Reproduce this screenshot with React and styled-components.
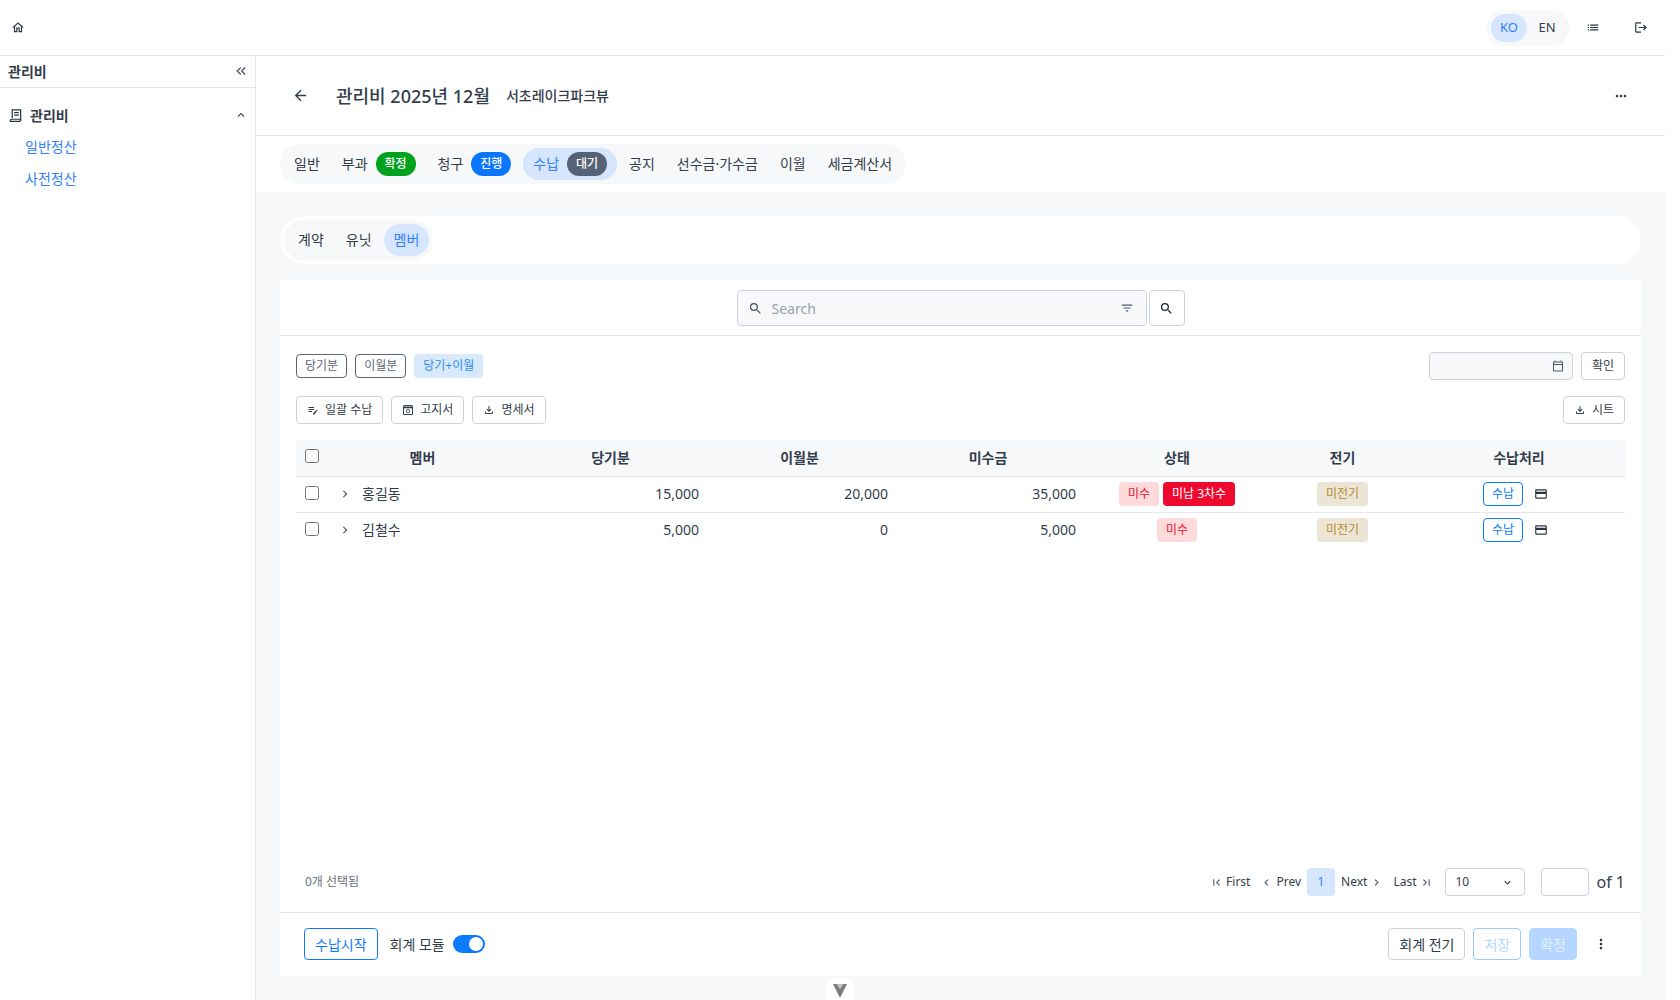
import React from "react";
import styled, { createGlobalStyle } from "styled-components";
import {
  MdOutlineHome,
  MdKeyboardDoubleArrowLeft,
  MdExpandLess,
  MdArrowBack,
  MdMoreHoriz,
  MdMoreVert,
  MdSearch,
  MdFilterList,
  MdOutlineCalendarToday,
  MdOutlineFileDownload,
  MdCreditCard,
  MdChevronRight,
  MdChevronLeft,
  MdFirstPage,
  MdLastPage,
  MdExpandMore,
  MdLogout,
  MdList,
  MdOutlineEditNote,
} from "react-icons/md";

const GlobalStyle = createGlobalStyle`
html, body {
  margin: 0;
  padding: 0;
  height: 100%;
  overflow: hidden;
  background: #fff;
}
body {
  font-family: "Noto Sans", "Noto Sans CJK KR", sans-serif;
  color: #333d4b;
  font-size: 14px;
  line-height: 1.5;
}
* { box-sizing: border-box; }
`;

const Page = styled.div`
position: relative;
height: 100vh;
padding-right: 15px;
display: flex;
flex-direction: column;
overflow: hidden;
`;
const TopBar = styled.header`
height: 56px;
flex: none;
display: flex;
align-items: center;
border-bottom: 1px solid #e5e7eb;
padding-left: 11px;
padding-right: 17px;
`;
const TopIcon = styled.span`
display: flex;
align-items: center;
justify-content: center;
width: 14px;
font-size: 15px;
color: #2b3444;
margin-left: ${(p) => p.$left || 0}px;
`;
const LangSwitch = styled.div`
margin-left: auto;
display: flex;
gap: 2px;
padding: 4px;
height: 36px;
border-radius: 18px;
background: #f7f8fa;
`;
const LangItem = styled.div`
width: 36px;
height: 28px;
border-radius: 14px;
font-size: 13px;
display: flex;
align-items: center;
justify-content: center;
color: ${(p) => (p.$active ? "#2f7fff" : "#333d4b")};
background: ${(p) => (p.$active ? "#d6e6ff" : "transparent")};
`;
const Body = styled.div`
flex: 1;
display: flex;
min-height: 0;
`;
const Sidebar = styled.aside`
width: 256px;
flex: none;
border-right: 1px solid #e5e7eb;
`;
const SideTitle = styled.div`
height: 32px;
display: flex;
align-items: center;
justify-content: space-between;
padding: 0 6px 1px 8px;
border-bottom: 1px solid #e5e7eb;
font-weight: 700;
font-size: 14px;
svg { font-size: 16px; color: #4a5568; }
`;
const SideGroup = styled.div`
height: 30px;
margin-top: 12px;
display: flex;
align-items: center;
padding: 0 7px 0 8px;
font-weight: 700;
font-size: 14px;
> svg:first-child { width: 15px; height: 15px; margin-right: 7px; }
> svg:last-child { margin-left: auto; font-size: 14px; }
`;
const SideLink = styled.div`
height: 32px;
display: flex;
align-items: center;
padding-left: 25px;
color: #2f7fff;
font-size: 14px;
`;
const Main = styled.main`
flex: 1;
min-width: 0;
display: flex;
flex-direction: column;
`;
const ContentHead = styled.div`
height: 80px;
flex: none;
display: flex;
align-items: center;
border-bottom: 1px solid #e5e7eb;
padding: 0 24px 0 36px;
> svg:first-child { font-size: 17px; margin-right: 27px; }
> svg:last-child { margin-left: auto; font-size: 16px; margin-right: 12px; }
`;
const PageTitle = styled.h1`
margin: 2px 0 0;
font-size: 18px;
font-weight: 500;
`;
const PageSub = styled.span`
font-size: 14px;
font-weight: 500;
margin-left: 16px;
`;
const TabRow = styled.div`
flex: none;
padding: 8px 24px;
height: 56px;
`;
const TabList = styled.div`
display: inline-flex;
align-items: center;
gap: 2px;
height: 40px;
padding: 4px;
border-radius: 20px;
background: #f7f8fa;
`;
const Tab = styled.div`
height: 32px;
padding: 0 10px 2px;
border-radius: 16px;
display: flex;
align-items: center;
gap: 8px;
white-space: nowrap;
font-size: 14px;
color: ${(p) => (p.$active ? "#2f7fff" : "#333d4b")};
background: ${(p) => (p.$active ? "#d6e6ff" : "transparent")};
`;
const TabBadge = styled.span`
height: 24px;
width: 40px;
margin-bottom: -2px;
border-radius: 12px;
color: #fff;
font-size: 12px;
font-weight: 500;
display: flex;
align-items: center;
justify-content: center;
background: ${(p) => p.$color};
`;
const Content = styled.div`
flex: 1;
min-height: 0;
background: #f7f8fa;
padding: 24px;
display: flex;
flex-direction: column;
gap: 16px;
`;
const SubStrip = styled.div`
height: 48px;
flex: none;
background: #fff;
border-radius: 24px;
padding: 4px;
`;
const Card = styled.section`
flex: 1;
min-height: 0;
background: #fff;
display: flex;
flex-direction: column;
`;
const SearchRow = styled.div`
height: 56px;
flex: none;
display: flex;
justify-content: center;
align-items: flex-start;
gap: 2px;
padding-top: 10px;
border-bottom: 1px solid #e5e7eb;
`;
const SearchBox = styled.div`
width: 410px;
height: 36px;
display: flex;
align-items: center;
padding: 0 12px 0 10px;
gap: 9px;
background: #f8f8fb;
border: 1px solid #cbd2e0;
border-radius: 4px;
color: #9aa1ac;
font-size: 14px;
svg:first-child { font-size: 15px; color: #4a5568; }
svg:last-child { margin-left: auto; font-size: 14px; color: #4a5568; }
`;
const SearchButton = styled.button`
width: 36px;
height: 36px;
padding: 0;
display: flex;
align-items: center;
justify-content: center;
background: #fff;
border: 1px solid #cbd2e0;
border-radius: 4px;
color: #1f2937;
font-size: 15px;
`;
const ToolRow = styled.div`
display: flex;
align-items: center;
gap: 8px;
padding: 0 16px;
margin-top: 16px;
height: 28px;
flex: none;
`;
const Spacer = styled.div`
flex: 1;
`;
const Pill = styled.button`
height: 24px;
padding: 0 ${(p) => (p.$active ? "9px" : "8px")};
font: inherit;
font-size: 12px;
border-radius: 4px;
border: ${(p) => (p.$active ? "none" : "1px solid #5a6478")};
background: ${(p) => (p.$active ? "#d7e9fb" : "#fff")};
color: ${(p) => (p.$active ? "#2e8fee" : "#5a6478")};
`;
const ToolButton = styled.button`
height: 28px;
padding: 0 10px;
display: flex;
align-items: center;
gap: 6px;
font: inherit;
font-size: 12px;
color: #333d4b;
background: #fff;
border: 1px solid #cbd2e0;
border-radius: 4px;
svg { width: 12px; height: 12px; }
`;
const DateInput = styled.div`
width: 144px;
height: 28px;
display: flex;
align-items: center;
justify-content: flex-end;
padding-right: 8px;
background: #f7f8fa;
border: 1px solid #cbd2e0;
border-radius: 4px;
color: #4a5568;
font-size: 12px;
`;
const gridCols = "33px 187px 189px 189px 188px 190px 141px 212px";
const TableWrap = styled.div`
margin: 16px 16px 0;
flex: none;
`;
const HeadRow = styled.div`
display: grid;
grid-template-columns: ${gridCols};
height: 37px;
padding-bottom: 2px;
align-items: center;
background: #f7f8fa;
border-bottom: 1px solid #e5e7eb;
font-weight: 700;
font-size: 14px;
text-align: center;
`;
const Row = styled.div`
display: grid;
grid-template-columns: ${gridCols};
height: 36px;
padding-bottom: 2px;
align-items: center;
border-bottom: 1px solid ${(p) => (p.$last ? "transparent" : "#e5e7eb")};
font-size: 14px;
`;
const CheckCell = styled.div`
padding-left: 9px;
display: flex;
margin-top: ${(p) => (p.$row ? -1 : -3)}px;
input {
  width: 14px;
  height: 14px;
  margin: 0;
}
`;
const NameCell = styled.div`
display: flex;
align-items: center;
gap: 10px;
padding-left: 9px;
svg { font-size: 14px; color: #4a5568; }
`;
const NumCell = styled.div`
text-align: right;
padding-right: 6px;
`;
const CenterCell = styled.div`
display: flex;
justify-content: center;
align-items: center;
gap: ${(p) => p.$gap || 0}px;
`;
const Status = styled.span`
height: 24px;
padding: 0 9px;
border-radius: 4px;
font-size: 12px;
display: flex;
align-items: center;
color: ${(p) => p.$fg};
background: ${(p) => p.$bg};
`;
const RowButton = styled.button`
height: 24px;
width: 40px;
padding: 0;
font: inherit;
font-size: 12px;
color: #0a7aff;
background: #fff;
border: 1px solid #0a7aff;
border-radius: 4px;
`;
const RowIcon = styled.span`
width: 28px;
display: flex;
justify-content: center;
font-size: 14px;
color: #2b3444;
`;
const PagerRow = styled.div`
margin-top: auto;
flex: none;
display: flex;
align-items: center;
height: 28px;
padding: 0 16px 0 25px;
font-size: 12px;
margin-bottom: 16px;
`;
const Selected = styled.div`
color: #6b7280;
margin-right: auto;
`;
const PageLink = styled.div`
height: 28px;
padding: 0 5px;
display: flex;
align-items: center;
gap: 3px;
svg { font-size: 13px; color: #4a5568; }
`;
const PageCurrent = styled.div`
width: 28px;
height: 28px;
margin: 0 1px;
border-radius: 4px;
background: #d6e6ff;
color: #2f7fff;
display: flex;
align-items: center;
justify-content: center;
`;
const PageSelect = styled.div`
width: 80px;
height: 28px;
margin-left: 7px;
padding: 0 10px;
display: flex;
align-items: center;
justify-content: space-between;
border: 1px solid #cbd2e0;
border-radius: 4px;
svg { font-size: 13px; }
`;
const PageInput = styled.div`
width: 48px;
height: 28px;
margin-left: 16px;
border: 1px solid #cbd2e0;
border-radius: 4px;
`;
const PageOf = styled.span`
margin-left: 8px;
font-size: 16px;
`;
const Footer = styled.div`
flex: none;
height: 64px;
display: flex;
align-items: center;
padding: 0 24px 1px;
border-top: 1px solid #e5e7eb;
`;
const FootButton = styled.button`
height: 32px;
padding: 0 10px;
font: inherit;
font-size: 14px;
border-radius: 4px;
background: #fff;
border: 1px solid #cbd2e0;
color: #333d4b;
margin-left: ${(p) => p.$left || 0}px;
`;
const OutlineButton = styled(FootButton)`
border-color: ${(p) => (p.$faded ? "#9ccaff" : "#0a7aff")};
color: ${(p) => (p.$faded ? "#b3d6ff" : "#0a7aff")};
`;
const SolidButton = styled(FootButton)`
border-color: #b5d6ff;
background: #b5d6ff;
color: #e0eeff;
`;
const ToggleLabel = styled.span`
margin-left: 12px;
font-size: 14px;
`;
const Toggle = styled.div`
width: 32px;
height: 18px;
margin-left: 8px;
border-radius: 9px;
background: #0a7aff;
display: flex;
justify-content: flex-end;
padding: 2px;
&::after {
  content: "";
  width: 14px;
  height: 14px;
  border-radius: 50%;
  background: #fff;
}
`;
const Kebab = styled.span`
width: 32px;
margin-left: 8px;
display: flex;
justify-content: center;
font-size: 16px;
color: #2b3444;
`;
// little handle that hangs over the bottom edge of the page
const ScrollHandle = styled.div`
position: absolute;
left: 825px;
top: 977px;
width: 30px;
height: 30px;
border-radius: 50%;
background: #fff;
display: flex;
justify-content: center;
padding-top: 7px;
svg { width: 14px; height: 14px; }
`;

const LedgerIcon = () => (
  <svg viewBox="0 0 16 16" fill="none" stroke="#2b3444" strokeWidth="1.3">
    <path d="M4.5 11V2h9v10" />
    <path d="M6.5 5h5M6.5 7.5h5" />
    <path d="M2.5 14.2h9.5a1.5 1.5 0 0 0 1.5-2.2H4a1.5 1.5 0 0 0-1.5 2.2z" />
  </svg>
);
const NoticeIcon = () => (
  <svg viewBox="0 0 16 16" fill="none" stroke="#3a4454" strokeWidth="1.4">
    <rect x="2" y="2" width="12" height="12" rx="1.5" />
    <path d="M2 4.5h12" strokeWidth="2.4" />
    <circle cx="8" cy="9.5" r="2.2" strokeWidth="1.2" />
  </svg>
);

const members = [
  { name: "홍길동", cur: "15,000", next: "20,000", due: "35,000", overdue: true },
  { name: "김철수", cur: "5,000", next: "0", due: "5,000", overdue: false },
];

export default function App() {
  return (
    <Page>
      <GlobalStyle />
      <TopBar>
        <TopIcon><MdOutlineHome /></TopIcon>
        <LangSwitch>
          <LangItem $active>KO</LangItem>
          <LangItem>EN</LangItem>
        </LangSwitch>
        <TopIcon $left={17}><MdList /></TopIcon>
        <TopIcon $left={34}><MdLogout /></TopIcon>
      </TopBar>
      <Body>
        <Sidebar>
          <SideTitle>관리비<MdKeyboardDoubleArrowLeft /></SideTitle>
          <SideGroup><LedgerIcon />관리비<MdExpandLess /></SideGroup>
          <SideLink>일반정산</SideLink>
          <SideLink>사전정산</SideLink>
        </Sidebar>
        <Main>
          <ContentHead>
            <MdArrowBack />
            <PageTitle>관리비 2025년 12월</PageTitle>
            <PageSub>서초레이크파크뷰</PageSub>
            <MdMoreHoriz />
          </ContentHead>
          <TabRow>
            <TabList>
              <Tab>일반</Tab>
              <Tab>부과<TabBadge $color="#00a11c">확정</TabBadge></Tab>
              <Tab>청구<TabBadge $color="#0a75ff">진행</TabBadge></Tab>
              <Tab $active>수납<TabBadge $color="#566276">대기</TabBadge></Tab>
              <Tab>공지</Tab>
              <Tab>선수금·가수금</Tab>
              <Tab>이월</Tab>
              <Tab>세금계산서</Tab>
            </TabList>
          </TabRow>
          <Content>
            <SubStrip>
              <TabList>
                <Tab>계약</Tab>
                <Tab>유닛</Tab>
                <Tab $active>멤버</Tab>
              </TabList>
            </SubStrip>
            <Card>
              <SearchRow>
                <SearchBox><MdSearch />Search<MdFilterList /></SearchBox>
                <SearchButton><MdSearch /></SearchButton>
              </SearchRow>
              <ToolRow>
                <Pill>당기분</Pill>
                <Pill>이월분</Pill>
                <Pill $active>당기+이월</Pill>
                <Spacer />
                <DateInput><MdOutlineCalendarToday /></DateInput>
                <ToolButton>확인</ToolButton>
              </ToolRow>
              <ToolRow>
                <ToolButton><MdOutlineEditNote />일괄 수납</ToolButton>
                <ToolButton><NoticeIcon />고지서</ToolButton>
                <ToolButton><MdOutlineFileDownload />명세서</ToolButton>
                <Spacer />
                <ToolButton><MdOutlineFileDownload />시트</ToolButton>
              </ToolRow>
              <TableWrap>
                <HeadRow>
                  <CheckCell><input type="checkbox" /></CheckCell>
                  <div>멤버</div>
                  <div>당기분</div>
                  <div>이월분</div>
                  <div>미수금</div>
                  <div>상태</div>
                  <div>전기</div>
                  <div>수납처리</div>
                </HeadRow>
                {members.map((m, i) => (
                  <Row key={m.name} $last={i === members.length - 1}>
                    <CheckCell $row><input type="checkbox" /></CheckCell>
                    <NameCell><MdChevronRight />{m.name}</NameCell>
                    <NumCell>{m.cur}</NumCell>
                    <NumCell>{m.next}</NumCell>
                    <NumCell>{m.due}</NumCell>
                    <CenterCell $gap={4}>
                      <Status $fg="#ee1133" $bg="#ffdada">미수</Status>
                      {m.overdue && <Status $fg="#fff" $bg="#ee0a2f">미납 3차수</Status>}
                    </CenterCell>
                    <CenterCell><Status $fg="#b78a2b" $bg="#ece5d6">미전기</Status></CenterCell>
                    <CenterCell $gap={4}>
                      <RowButton>수납</RowButton>
                      <RowIcon><MdCreditCard /></RowIcon>
                    </CenterCell>
                  </Row>
                ))}
              </TableWrap>
              <PagerRow>
                <Selected>0개 선택됨</Selected>
                <PageLink><MdFirstPage />First</PageLink>
                <PageLink><MdChevronLeft />Prev</PageLink>
                <PageCurrent>1</PageCurrent>
                <PageLink>Next<MdChevronRight /></PageLink>
                <PageLink>Last<MdLastPage /></PageLink>
                <PageSelect>10<MdExpandMore /></PageSelect>
                <PageInput />
                <PageOf>of 1</PageOf>
              </PagerRow>
              <Footer>
                <OutlineButton>수납시작</OutlineButton>
                <ToggleLabel>회계 모듈</ToggleLabel>
                <Toggle />
                <Spacer />
                <FootButton>회계 전기</FootButton>
                <OutlineButton $faded $left={8}>저장</OutlineButton>
                <SolidButton $left={8}>확정</SolidButton>
                <Kebab><MdMoreVert /></Kebab>
              </Footer>
            </Card>
          </Content>
        </Main>
      </Body>
      <ScrollHandle>
        <svg viewBox="0 0 14 14">
          <path d="M0 0h4l3 5 3-5h4L7 14z" fill="#7d7d7d" />
          <path d="M4 0l3 5 3-5z" fill="#bdbdbd" />
        </svg>
      </ScrollHandle>
    </Page>
  );
}
